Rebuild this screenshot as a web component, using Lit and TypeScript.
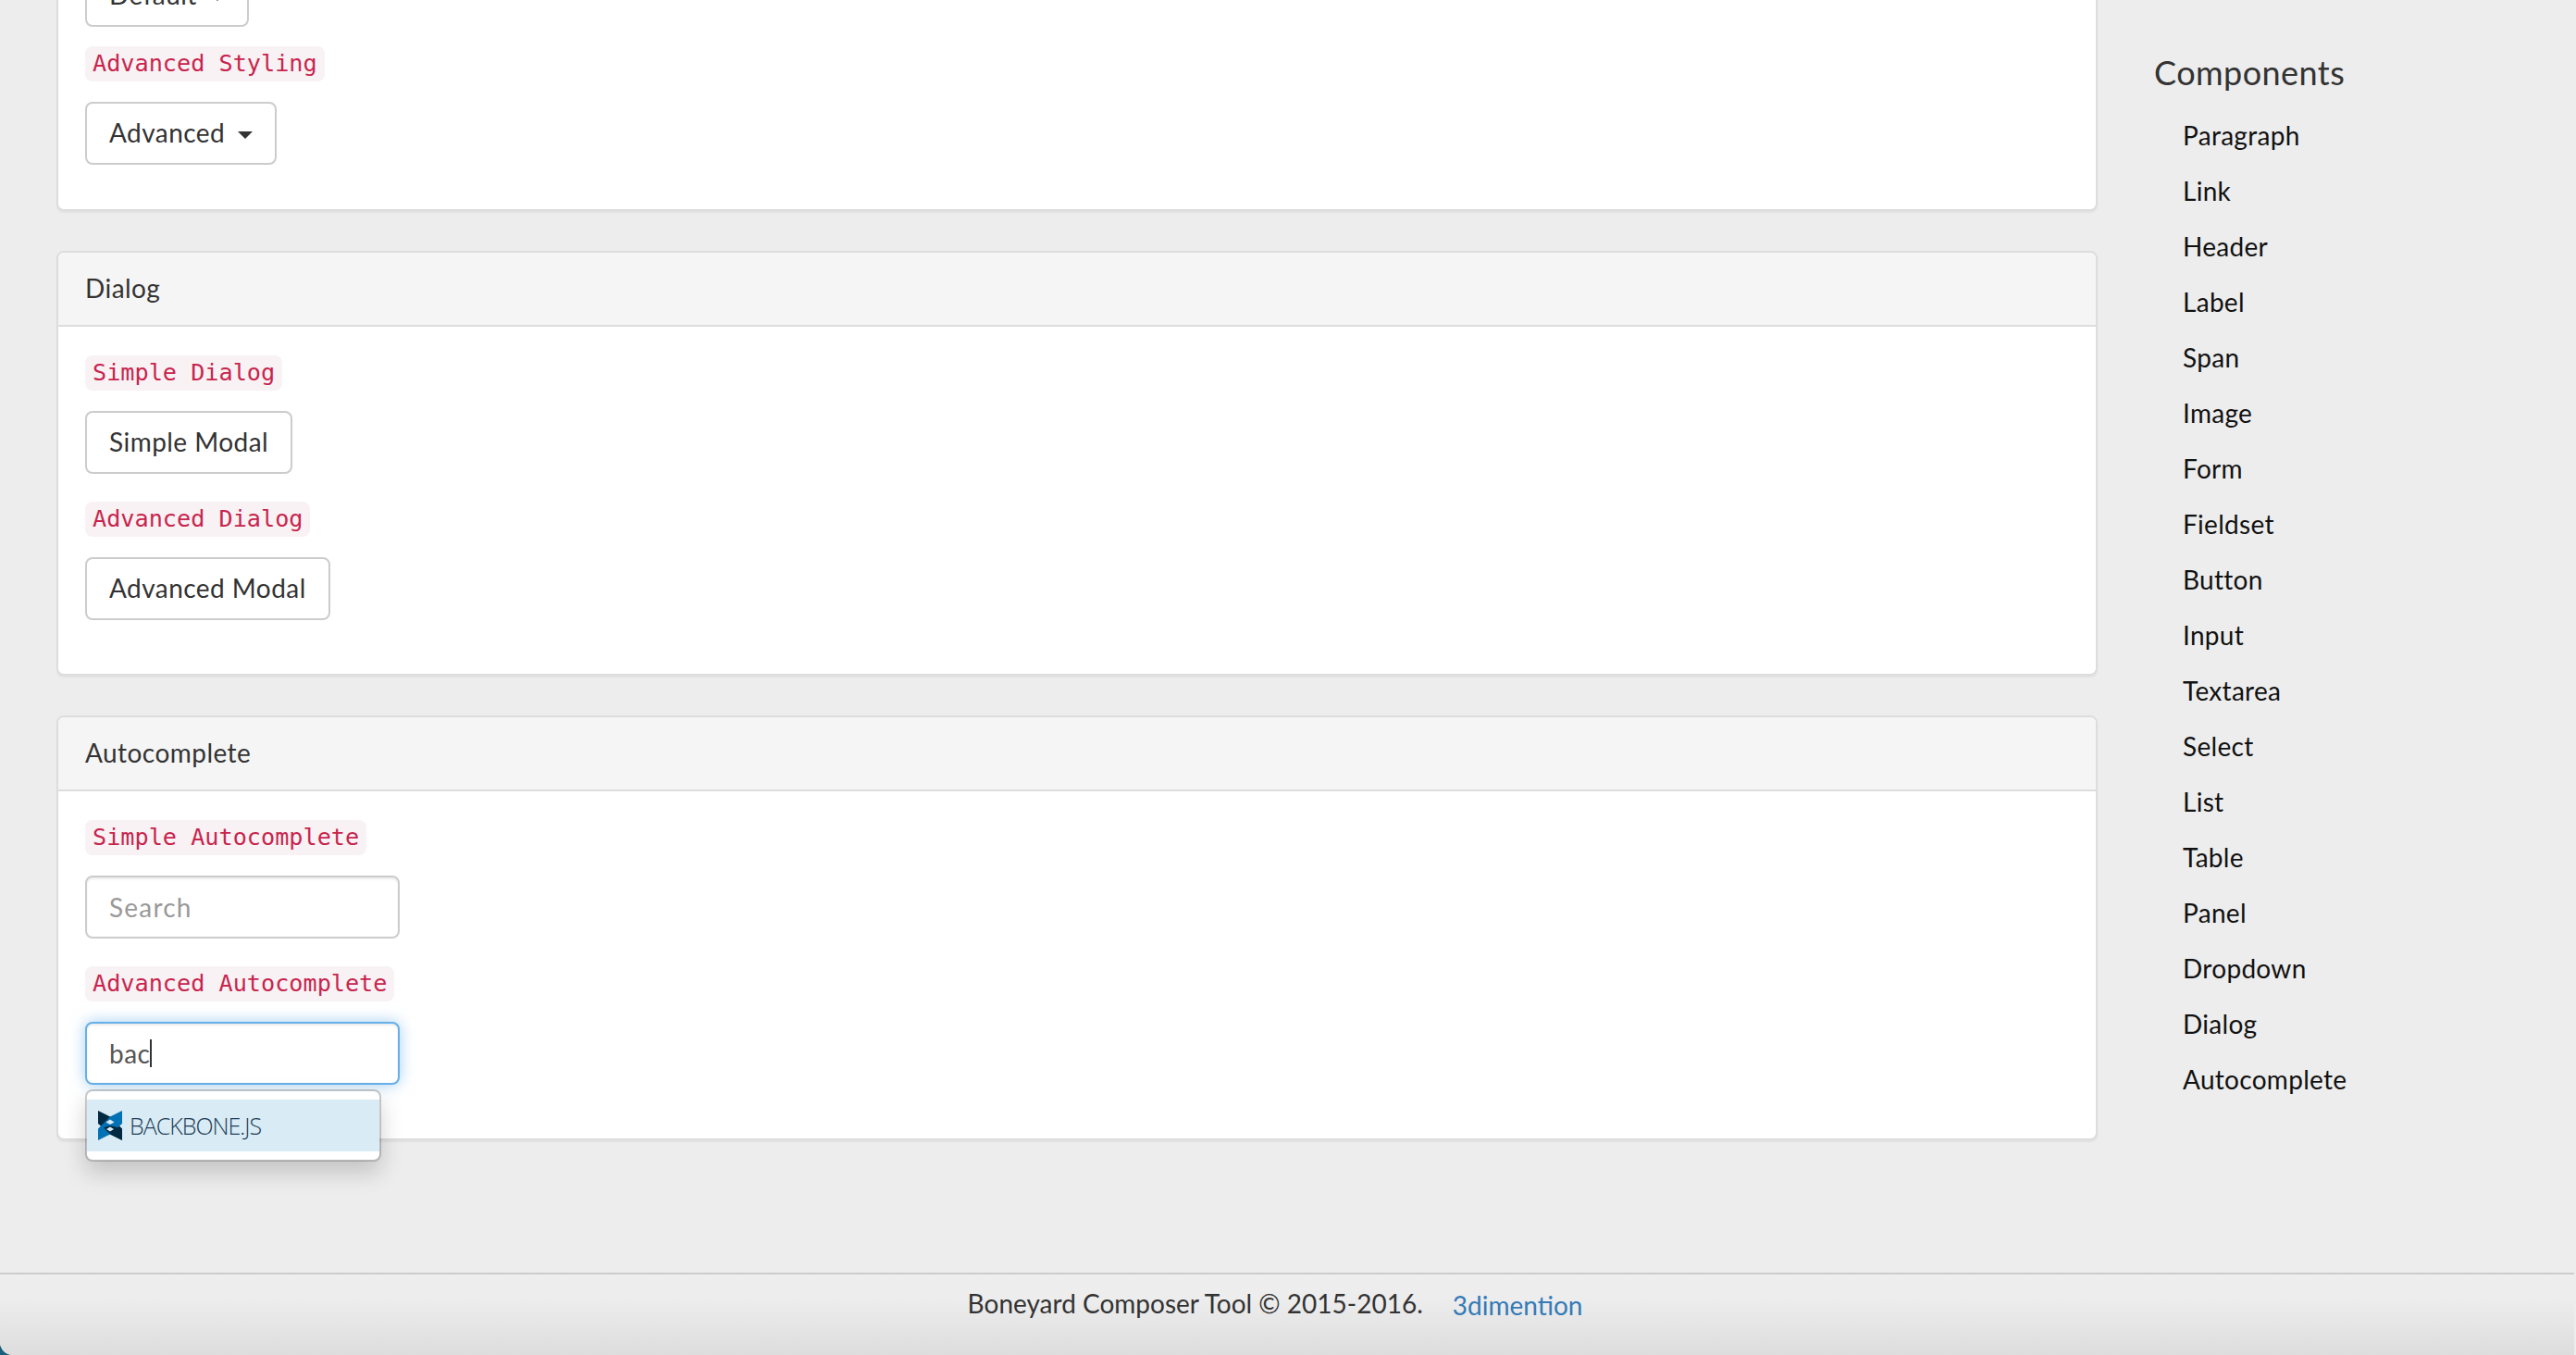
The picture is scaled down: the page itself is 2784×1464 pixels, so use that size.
import { LitElement, html, css, svg } from "lit";
import { customElement } from "lit/decorators.js";

const NAV = ["Paragraph","Link","Header","Label","Span","Image","Form","Fieldset","Button","Input","Textarea","Select","List","Table","Panel","Dropdown","Dialog","Autocomplete"];

const logo = svg`<svg class="logo" viewBox="0 0 26 32" width="26" height="32" aria-hidden="true">
  <polygon fill="#002a41" points="0,0 13,6.5 26,19.5 26,32 13,25.5 0,14"/>
  <polygon fill="#0071b5" points="26,0 13,6.5 0,19.5 0,32 13,25.5 26,14"/>
  <polygon fill="#002a41" points="13,25.5 6,18.5 13,16 26,19.5 26,32"/>
  <polygon fill="#d9ebf4" points="13,9.5 17.5,12.5 13,15 8.5,12.5"/>
  <polygon fill="#d9ebf4" points="13,17.5 17,20 13,22.5 9,20"/>
</svg>`;

@customElement("app-root")
export class AppRoot extends LitElement {
  static styles = css`
    :host { display: block; height: 1464px; overflow: hidden; background: #1b6079; font-family: Lato, "Noto Sans", sans-serif; font-size: 28px; color: #333; font-weight: 400; letter-spacing: .45px; }
    * { box-sizing: border-box; }
    .page { height: 1464px; display: flex; flex-direction: column; background: #ededed; border-bottom-left-radius: 14px; overflow: hidden; }
    .top { flex: 1; min-height: 0; display: grid; grid-template-columns: 2206px 1fr; column-gap: 61px; padding-left: 61px; overflow: hidden; }
    .main { margin-top: -39px; }
    .panel { background: #fff; border: 2px solid #ddd; border-radius: 8px; box-shadow: 0 2px 2px rgba(0,0,0,.05); margin-bottom: 43px; }
    .panel-first { border-top: none; }
    .head { height: 80px; background: #f5f5f5; border-bottom: 2px solid #ddd; border-radius: 6px 6px 0 0; padding: 0 29px 2px; display: flex; align-items: center; font-size: 28px; }
    .body { padding: 30px 29px 58px; display: flex; flex-direction: column; align-items: flex-start; }
    .body.short { padding-bottom: 48px; padding-top: 0; }
    code { display: block; height: 38px; line-height: 38px; padding: 0 8px; margin: 1px 0 22px; font-family: "DejaVu Sans Mono", "Liberation Mono", monospace; font-size: 25.2px; font-weight: 400; letter-spacing: 0; color: #c7254e; background: #f9f2f4; border-radius: 8px; white-space: nowrap; }
    .btn { height: 68px; padding: 0 24px 2px; border: 2px solid #ccc; border-radius: 8px; background: #fff; display: flex; align-items: center; gap: 14px; color: #333; margin-bottom: 29px; }
    .btn.tight { margin-bottom: 20px; }
    .btn:last-child { margin-bottom: 0; }
    .caret { width: 0; height: 0; border-top: 8px solid #333; border-left: 8px solid transparent; border-right: 8px solid transparent; margin-top: 6px; }
    .field { position: relative; width: 340px; height: 68px; margin-bottom: 29px; }
    .field:last-child { margin-bottom: 0; }
    .input { width: 340px; height: 68px; padding: 0 24px 1px; border: 2px solid #ccc; border-radius: 8px; background: #fff; display: flex; align-items: center; color: #555; box-shadow: inset 0 2px 2px rgba(0,0,0,.075); }
    .placeholder { color: #999; letter-spacing: 1.2px; }
    .focus { border-color: #66afe9; box-shadow: inset 0 2px 2px rgba(0,0,0,.075), 0 0 16px rgba(102,175,233,.6); }
    .cursor { width: 2px; height: 30px; background: #333; margin-left: 0; }
    .menu { position: absolute; left: 0; top: 73px; width: 320px; height: 78px; padding: 9px 0; background: #fff; border: 2px solid rgba(0,0,0,.2); border-radius: 8px; box-shadow: 0 12px 24px rgba(0,0,0,.175); background-clip: padding-box; z-index: 2; }
    .item { height: 56px; background: #d9ebf4; display: flex; align-items: center; padding-left: 12px; gap: 8px; }
    .brand { font-family: "Open Sans", sans-serif; font-weight: 300; font-size: 25px; letter-spacing: -1px; color: #1c3d57; }
    .side h2 { margin: 0; font-size: 36px; font-weight: 400; line-height: 50px; padding-top: 53px; color: #333; }
    .side ul { list-style: none; margin: 13px 0 0; padding: 0 0 0 31px; }
    .side li { height: 60px; line-height: 60px; color: #111; letter-spacing: .3px; }
    .foot { height: 89px; flex: none; border-top: 2px solid #ccc; margin-right: 2px; background: linear-gradient(#eee, #ededed 30%, #ddd); display: flex; justify-content: center; padding: 13px 26px 0 0; gap: 32px; letter-spacing: 0; }
    .foot span { line-height: 36px; }
    .foot a { color: #337ab7; text-decoration: none; line-height: 36px; margin-top: 2px; }
  `;

  render() {
    return html`<div class="page">
      <div class="top">
        <div class="main">
          <section class="panel panel-first">
            <div class="body short">
              <div class="btn tight"><span>Default</span><i class="caret"></i></div>
              <code>Advanced Styling</code>
              <div class="btn"><span>Advanced</span><i class="caret"></i></div>
            </div>
          </section>
          <section class="panel">
            <div class="head">Dialog</div>
            <div class="body">
              <code>Simple Dialog</code>
              <div class="btn">Simple Modal</div>
              <code>Advanced Dialog</code>
              <div class="btn">Advanced Modal</div>
            </div>
          </section>
          <section class="panel">
            <div class="head">Autocomplete</div>
            <div class="body">
              <code>Simple Autocomplete</code>
              <div class="field"><div class="input"><span class="placeholder">Search</span></div></div>
              <code>Advanced Autocomplete</code>
              <div class="field">
                <div class="input focus"><span>bac</span><i class="cursor"></i></div>
                <div class="menu"><div class="item">${logo}<span class="brand">BACKBONE.JS</span></div></div>
              </div>
            </div>
          </section>
        </div>
        <aside class="side">
          <h2>Components</h2>
          <ul>${NAV.map((n) => html`<li>${n}</li>`)}</ul>
        </aside>
      </div>
      <footer class="foot"><span>Boneyard Composer Tool © 2015-2016.</span><a href="#">3dimention</a></footer>
    </div>`;
  }
}
